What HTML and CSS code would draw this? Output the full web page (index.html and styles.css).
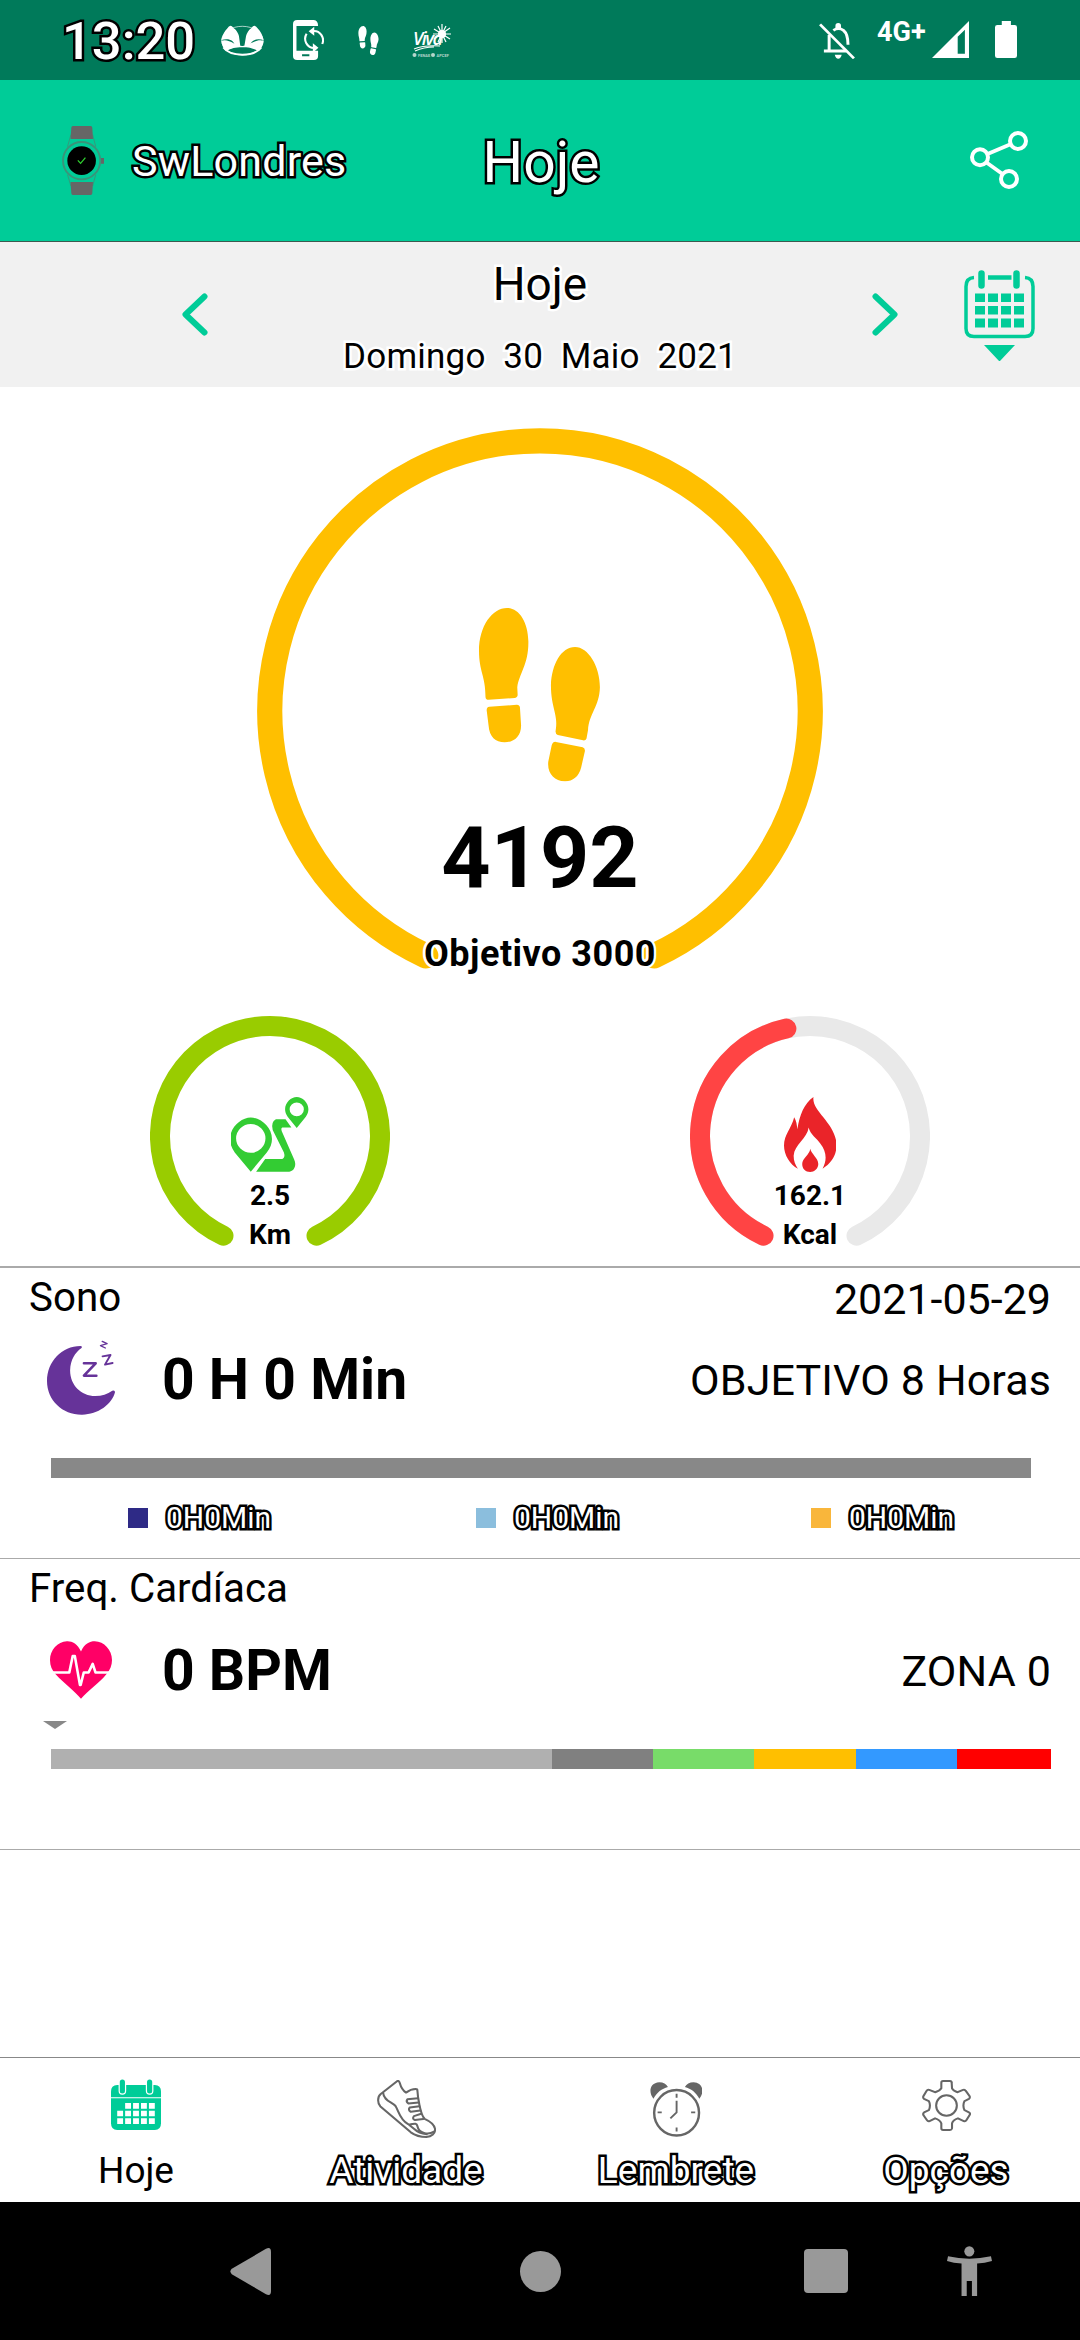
FILE: index.html
```html
<!DOCTYPE html>
<html lang="pt">
<head>
<meta charset="utf-8">
<title>Hoje</title>
<link rel="stylesheet" href="styles.css">
</head>
<body>
<svg class="defs" aria-hidden="true">
  <symbol id="feet" viewBox="625 543 317 454">
    <path d="M698 543C730 543 753 580 754 630C755 690 730 715 725 750L726 770Q726 777 719 778L650 783Q643 783 642 776C642 720 625 710 625 655C625 590 660 543 698 543Z"/>
    <path d="M652 801L724 796Q731 796 732 803L735 850C735 880 715 894 692 894C668 894 652 880 650 850L645 810Q645 802 652 801Z"/>
    <path d="M876 645C910 645 941 695 941 750C940 800 912 820 910 862L906 884Q904 890 897 889L831 875Q825 873 825 866C834 825 813 805 813 745C815 690 840 645 876 645Z"/>
    <path d="M826 893L896 907Q902 909 902 916L892 960C886 985 868 997 849 996C822 995 803 975 806 945L815 902Q818 892 826 893Z"/>
  </symbol>
</svg>

<header class="status">
  <span class="clock outlined">13:20</span>
  <svg class="st-mask" viewBox="641 74 127 95" preserveAspectRatio="none">
    <ellipse cx="704" cy="122" rx="61" ry="44" fill="none" stroke="#fff" stroke-width="2.5" opacity=".8"/>
    <path fill="#fff" d="M642 120C645 105 652 92 660 84Q668 69 678 83Q690 92 694 108L698 138L682 138C680 122 665 113 642 120ZM767 120C764 105 757 92 749 84Q740 69 731 83Q719 92 715 108L710 138L727 138C729 122 744 113 767 120Z"/>
    <path fill="#fff" d="M642 122C665 114 683 138 704 138C725 138 743 114 767 122C766 137 758 148 752 154C735 145 725 142 704 142C683 142 672 145 656 154C648 146 643 135 642 122Z"/>
    <path fill="none" stroke="#fff" stroke-width="6" d="M648 143Q664 165 704 165T760 143"/>
  </svg>
  <svg class="st-phone" viewBox="850 60 89 120" preserveAspectRatio="none">
    <path fill="#fff" fill-rule="evenodd" d="M862 60H910Q922 62 922 78H860V152H922V168Q922 180 910 180H862Q850 180 850 168V72Q850 60 862 60ZM876 163V169H897V163Z"/>
    <path fill="none" stroke="#fff" stroke-width="6" d="M908 93A26 28 0 0 1 934 132M911 144A26 28 0 0 1 889 101"/>
    <path fill="#fff" d="M895 94L911 80V107ZM923 143L907 130V158Z"/>
  </svg>
  <svg class="st-feet" preserveAspectRatio="none"><use href="#feet"/></svg>
  <svg class="st-viva" viewBox="0 0 40 34">
    <text x="1" y="21" class="viva-word">Viva</text>
    <path d="M2 25Q12 21 28 22M3 27Q12 23 22 23" fill="none" stroke="#fff" stroke-width="1.1"/>
    <path d="M30 0V19M22 5L38 15M38 4L22 15M21 10H39M26 2L34 18M34 2L26 18" stroke="#fff" stroke-width="1.2"/>
    <circle cx="30" cy="10" r="4" fill="#fff"/>
    <circle cx="2.5" cy="31" r="2" fill="#b5d6cc"/><circle cx="21" cy="31" r="2" fill="#b5d6cc"/>
    <text x="6" y="32.5" class="viva-tag">FENAE</text><text x="24.5" y="32.5" class="viva-tag">APCEF</text>
  </svg>
  <svg class="st-bell" viewBox="810 68 103 108" preserveAspectRatio="none" fill="none" stroke="#fff">
    <path stroke-width="8.5" d="M851 90Q866 80 880 90Q893 101 893 133M839 104V152M824 152H888"/>
    <path stroke-width="8" d="M813 72L910 174"/>
    <path fill="#fff" stroke="none" d="M857 84V76A8 8 0 0 1 873 76V84ZM855 163H875Q872 175 865 175Q858 175 855 163Z"/>
  </svg>
  <span class="net">4G+</span>
  <svg class="st-signal" viewBox="1138 64 108 110" preserveAspectRatio="none"><path fill="#fff" fill-rule="evenodd" d="M1138 174L1246 64V174ZM1213 111V161H1234V90Z"/></svg>
  <svg class="st-batt" viewBox="1320 63 65 111" preserveAspectRatio="none"><path fill="#fff" d="M1340 63H1367V75H1378Q1385 75 1385 82V167Q1385 174 1378 174H1327Q1320 174 1320 167V82Q1320 75 1327 75H1340Z"/></svg>
</header>

<section class="appbar">
  <div class="device">
    <svg class="watch" viewBox="180 378 122 207" preserveAspectRatio="none">
      <path d="M206 404L196 440M269 404L278 440M196 524L206 558M278 524L269 558" stroke="#2f9e7d" stroke-width="3"/>
      <path fill="#666" d="M211 378H264Q267 379 268 383L270 417H205L207 383Q208 378 211 378ZM205 546H270L268 580Q267 585 264 585H211Q208 585 207 580ZM292 474H302V491H292Z"/>
      <ellipse cx="237" cy="482" rx="54" ry="56" fill="#00cc98" stroke="#3a947a" stroke-width="5.5"/>
      <ellipse cx="237" cy="482" rx="41.500" ry="43"/>
      <path d="M226 481L234 490L248 473" fill="none" stroke="#2fd12f" stroke-width="3.6"/>
    </svg>
    <span class="device-name outlined">SwLondres</span>
  </div>
  <h1 class="title outlined">Hoje</h1>
  <svg class="share" viewBox="970 131 58 58" fill="none" stroke="#fff" stroke-width="4">
    <circle cx="1018" cy="141" r="8"/><circle cx="980" cy="157.300" r="8"/><circle cx="1009" cy="179" r="8"/>
    <path stroke-width="3.800" d="M987.500 154L1010.500 144.300M986.500 162.500L1002.500 174"/>
  </svg>
</section>

<section class="datebar">
  <svg class="arrow" viewBox="0 0 26 43"><path d="M22.500 3.500L3.500 21.500L22.500 39.500"/></svg>
  <div class="datebox">
    <div class="day halo">Hoje</div>
    <div class="date halo">Domingo&nbsp; 30&nbsp; Maio&nbsp; 2021</div>
  </div>
  <svg class="arrow" viewBox="0 0 26 43"><path d="M3.500 3.500L22.500 21.500L3.500 39.500"/></svg>
  <svg class="cal" viewBox="964 269.500 71 91.500">
    <path d="M974 277Q966 277.500 966 286V328Q966 336 974 336H1025Q1033 336 1033 328V286Q1033 277.500 1025 277" fill="none" stroke="#00cc98" stroke-width="3.500"/>
    <path d="M988 277H1011.500" stroke="#00cc98" stroke-width="4.500"/>
    <path d="M981.500 273V285M1016.500 273V285" stroke="#00cc98" stroke-width="6.500" stroke-linecap="round"/>
    <path fill="#00cc98" d="M975 293h10v8.500h-10zM988 293h10v8.500h-10zM1001 293h10v8.500h-10zM1014 293h10v8.500h-10zM975 305.500h10v8.500h-10zM988 305.500h10v8.500h-10zM1001 305.500h10v8.500h-10zM1014 305.500h10v8.500h-10zM975 318h10v9h-10zM988 318h10v9h-10zM1001 318h10v9h-10zM1014 318h10v9h-10zM984 344.500H1015L999.500 361Z"/>
  </svg>
</section>

<main>
  <section class="summary">
    <div class="gauge gauge-big">
      <svg class="ring" viewBox="-283 -283 566 566"><path d="M-114.200 244.900A270.200 270.200 0 1 1 114.200 244.900" stroke="#ffbf00" stroke-width="25.200"/></svg>
      <div class="gauge-body">
        <svg class="feet" preserveAspectRatio="none"><use href="#feet"/></svg>
        <div class="steps">4192</div>
        <div class="goal halo">Objetivo 3000</div>
      </div>
    </div>
    <div class="gauges">
      <div class="gauge gauge-small">
        <svg class="ring" viewBox="-120 -120 240 240"><path d="M-46.500 99.700A110 110 0 1 1 46.500 99.700" stroke="#99cc00" stroke-width="20"/></svg>
        <div class="gauge-body">
          <svg class="route" viewBox="209 290 145 223" preserveAspectRatio="none" fill="#33cc33">
            <path fill-rule="evenodd" d="M246 512L216 455C192 403 222 351 246 351C270 351 302 403 276 455ZM246 370A27.500 43 0 1 0 246 456A27.500 43 0 1 0 246 370Z"/>
            <path d="M293 356H311L322 381H305Q302 383 304 392L327 475C333 495 326 511 318 512H256L273 474H305Q311 470 308 455L287 388Q283 365 293 356Z"/>
            <path fill-rule="evenodd" d="M332 382L315 349C302 320 318 290 332 290C346 290 362 320 349 349ZM332 306A13 20 0 1 0 332 347A13 20 0 1 0 332 306Z"/>
          </svg>
          <div class="val">2.5</div><div class="unit">Km</div>
        </div>
      </div>
      <div class="gauge gauge-small">
        <svg class="ring" viewBox="-120 -120 240 240"><path d="M-46.500 99.700A110 110 0 1 1 46.500 99.700" stroke="#e9e9e9" stroke-width="20"/><path d="M-46.500 99.700A110 110 0 0 1 -23.600 -107.400" stroke="#ff4444" stroke-width="20"/></svg>
        <div class="gauge-body">
          <svg class="fire" viewBox="1239 291 98 226" preserveAspectRatio="none" fill="#ea2429">
            <path d="M1294 291C1290 335 1337 370 1337 437C1337 465 1328 490 1311 507C1320 480 1318 455 1307 432C1300 415 1288 405 1285 383C1283 415 1258 435 1257 468C1257 485 1260 495 1265 507C1250 495 1239 465 1239 437C1239 405 1253 385 1258 352C1262 362 1263 375 1264 388C1268 345 1277 310 1294 291Z"/>
            <path d="M1288 447C1290 463 1303 475 1303 493C1303 508 1295 517 1288 517C1279 517 1273 508 1273 493C1273 475 1287 465 1288 447Z"/>
          </svg>
          <div class="val">162.1</div><div class="unit">Kcal</div>
        </div>
      </div>
    </div>
  </section>

  <section class="panel">
    <div class="panel-head"><span class="name">Sono</span><span class="info">2021-05-29</span></div>
    <div class="panel-main">
      <svg class="moon" viewBox="137 270 197 225" preserveAspectRatio="none">
        <path fill="#663399" d="M234 288Q240 289 237 294C218 308 205 330 204 360C203 403 235 438 277 438C296 438 312 432 326 422Q334 419 334 427C325 463 285 494 239 494C183 495 137 452 137 393C137 335 180 288 234 288Z"/>
        <g fill="none" stroke="#663399" stroke-linejoin="round" stroke-linecap="round"><path stroke-width="7.500" d="M244 340H278L244 377H280"/><path stroke-width="5.500" d="M298 319L321 315L305 344L327 339"/><path stroke-width="4" d="M297 274L311 281L292 287L306 294"/></g>
      </svg>
      <strong class="big">0 H 0 Min</strong><span class="info">OBJETIVO 8 Horas</span>
    </div>
    <div class="sleepbar"></div>
    <div class="legend">
      <div class="key k1"><i></i><span class="outlined">0H0Min</span></div>
      <div class="key k2"><i></i><span class="outlined">0H0Min</span></div>
      <div class="key k3"><i></i><span class="outlined">0H0Min</span></div>
    </div>
  </section>

  <section class="panel">
    <div class="panel-head"><span class="name">Freq. Cardíaca</span></div>
    <div class="panel-main">
      <svg class="heart" viewBox="145 275 180 175" preserveAspectRatio="none">
        <path fill="#ff0066" d="M235 307C225 283 208 275 194 276C167 277 145 303 145 332C145 350 151 363 162 376C185 402 215 425 235 449C255 425 288 402 308 376C320 362 325 348 325 332C325 303 302 276 275 276C260 276 245 283 235 307Z"/>
        <path fill="none" stroke="#fff" stroke-width="7.500" stroke-linejoin="round" d="M145 370H201L211 320H217L232 408H234L243 370H257L269 344L277 370H325"/>
      </svg>
      <strong class="big">0 BPM</strong><span class="info">ZONA 0</span>
    </div>
    <svg class="marker" viewBox="0 0 24 8"><path d="M0 0H24L12 8Z" fill="#888"/></svg>
    <div class="zones"><i class="z0"></i><i class="z1"></i><i class="z2"></i><i class="z3"></i><i class="z4"></i><i class="z5"></i></div>
  </section>
</main>

<nav class="tabs">
  <div class="tab">
    <svg class="t-cal" viewBox="322 117 145 153" preserveAspectRatio="none">
      <path fill="#00cc98" d="M340 135H449Q467 136 467 154V250Q467 270 449 270H340Q322 270 322 250V154Q322 136 340 135Z"/>
      <path stroke="#fff" stroke-width="3" d="M322 173H467"/>
      <path stroke="#fff" stroke-width="22" stroke-linecap="round" d="M355 126V153M434 126V153"/>
      <path stroke="#00cc98" stroke-width="15" stroke-linecap="round" d="M355 126V153M434 126V153"/>
      <path fill="#fff" d="M363 189h17v17h-17zM386 189h17v17h-17zM409 189h17v17h-17zM432 189h17v17h-17zM340 212h17v17h-17zM363 212h17v17h-17zM386 212h17v17h-17zM409 212h17v17h-17zM432 212h17v17h-17zM340 235h17v17h-17zM363 235h17v17h-17zM386 235h17v17h-17zM409 235h17v17h-17zM432 235h17v17h-17z"/>
    </svg>
    <span class="label">Hoje</span>
  </div>
  <div class="tab">
    <svg class="t-shoe" viewBox="1092 119 171 175" preserveAspectRatio="none" fill="none" stroke="#666" stroke-width="6" stroke-linejoin="round" stroke-linecap="round">
      <path d="M1151 122L1102 162C1093 170 1093 190 1102 199L1190 277C1205 288 1220 291 1235 291C1250 290 1262 280 1260 266C1258 252 1245 243 1230 236C1218 225 1210 170 1209 150Q1209 146 1204 146C1193 146 1185 150 1176 157C1166 150 1162 143 1158 128Q1156 120 1151 122Z"/>
      <path d="M1110 158C1111 182 1137 185 1146 198C1155 213 1158 238 1182 252C1191 257 1206 243 1209 258C1213 280 1240 286 1257 275M1182 252L1200 267Q1213 280 1236 283"/>
      <path d="M1211 174L1180 177Q1175 184 1183 190L1213 187M1215 198L1187 202Q1181 209 1190 215L1218 211M1220 221L1199 228Q1193 236 1202 240L1226 237"/>
    </svg>
    <span class="label outlined">Atividade</span>
  </div>
  <div class="tab">
    <svg class="t-clock" viewBox="318 127 152 163" preserveAspectRatio="none" fill="none" stroke="#666">
      <path fill="#666" stroke="none" d="M328 177C314 160 315 130 345 128C357 128 365 133 370 142C352 147 338 158 328 177ZM461 177C475 160 474 130 444 128C432 128 424 133 419 142C437 147 451 158 461 177Z"/>
      <ellipse cx="395" cy="219" rx="65" ry="68" stroke-width="7"/>
      <path stroke-width="5.500" d="M395 162V174M395 263V275M340 218H352M437 218H449M395 183V218L377 236"/>
    </svg>
    <span class="label outlined">Lembrete</span>
  </div>
  <div class="tab">
    <svg class="t-gear" viewBox="1105 119 142 154" preserveAspectRatio="none" fill="none" stroke="#666" stroke-width="6">
      <path d="M1161 144V127Q1161 122 1166 122H1186Q1191 122 1191 127L1192 144Q1195 151 1208 156L1224 149Q1229 147 1232 152L1243 168Q1245 173 1241 176L1228 183Q1222 196 1228 210L1241 217Q1246 220 1243 225L1234 240Q1231 245 1226 243L1209 235Q1195 240 1192 250V265Q1191 270 1186 270H1166Q1161 270 1161 265V250Q1157 240 1143 235L1127 243Q1122 245 1119 240L1109 225Q1107 220 1111 217L1125 210Q1131 196 1125 183L1111 176Q1107 173 1109 168L1118 152Q1121 147 1126 149L1143 156Q1157 151 1161 144Z"/>
      <ellipse cx="1176" cy="196" rx="30" ry="31"/>
    </svg>
    <span class="label outlined">Opções</span>
  </div>
</nav>

<footer class="sysnav">
  <svg class="s-back" viewBox="0 0 41 47"><path d="M36 .8Q41 -1.500 41 4V43Q41 48.500 36 46.200L1.800 26.200Q-1 23.500 1.800 20.800Z"/></svg>
  <svg class="s-home" viewBox="0 0 41 41"><circle cx="20.500" cy="20.500" r="20.500"/></svg>
  <svg class="s-recent" viewBox="0 0 44 44"><rect width="44" height="44" rx="4"/></svg>
  <svg class="s-access" viewBox="1181 617 130 151" preserveAspectRatio="none"><ellipse cx="1245.500" cy="633" rx="14.500" ry="15.500"/><path d="M1184 648Q1245 663 1308 648L1311 662Q1290 668 1268 670V768H1253V723H1238V768H1223V670Q1200 668 1181 662Z"/></svg>
</footer>
</body>
</html>
```
FILE: styles.css
```css
* { box-sizing: border-box; }
body {
  margin: 0;
  width: 1080px;
  height: 2340px;
  display: flex;
  flex-direction: column;
  background: #fff;
  color: #000;
  font-family: Roboto, "Liberation Sans", sans-serif;
  overflow: hidden;
}
svg { display: block; flex: none; }
.defs { display: none; }
.outlined {
  color: #fff;
  -webkit-text-stroke: 5px #000;
  paint-order: stroke fill;
  stroke-linejoin: round;
}
.halo {
  -webkit-text-stroke: 5px #fff;
  paint-order: stroke fill;
}

/* status bar */
.status {
  height: 80px;
  background: #007a5a;
  display: flex;
  align-items: flex-start;
  padding-left: 62px;
  color: #fff;
}
.clock { width: 159px; font-size: 52.500px; font-weight: 500; line-height: 83px; }
.st-mask { width: 43px; height: 31px; margin-top: 25px; }
.st-phone { width: 31px; height: 40px; margin: 20px 0 0 29px; }
.st-feet { width: 21px; height: 29px; margin: 26px 0 0 34px; fill: #fff; }
.st-viva { width: 40px; height: 34px; margin: 24px 0 0 33px; }
.viva-word { font: italic 600 18px "Open Sans", sans-serif; fill: #fff; letter-spacing: -1.5px; }
.viva-tag { font: 700 4px Roboto, sans-serif; fill: #b5d6cc; }
.st-bell { width: 36px; height: 36px; margin: 23px 0 0 367px; }
.net { width: 55px; margin: 16px 0 0 22px; font-size: 27px; font-weight: 700; line-height: 33px; }
.st-signal { width: 37px; height: 37px; margin-top: 21px; }
.st-batt { width: 22px; height: 37px; margin: 21px 0 0 26px; }

/* app bar */
.appbar {
  height: 162px;
  background: #00cc98;
  border-bottom: 1px solid #3c5a50;
  display: grid;
  grid-template-columns: 1fr 130px 1fr;
  padding: 0 52px 0 62px;
  align-items: start;
}
.device { display: flex; }
.watch { width: 42px; height: 69px; margin-top: 46px; }
.device-name { margin-left: 28px; font-size: 43px; letter-spacing: .2px; line-height: 163px; }
.title { margin: 0; font-size: 57px; font-weight: 400; line-height: 165px; text-align: center; margin-left: -8px; }
.share { width: 58px; height: 58px; margin-top: 51px; justify-self: end; }

/* date selector */
.datebar {
  height: 145px;
  background: #f1f1f1;
  display: flex;
  align-items: flex-start;
  padding-left: 182px;
}
.arrow { width: 26px; height: 43px; margin-top: 51px; fill: none; stroke: #00cc98; stroke-width: 6px; stroke-linecap: round; stroke-linejoin: round; }
.datebox { width: 664px; text-align: center; }
.day { font-size: 46px; line-height: 60px; margin-top: 12px; }
.date { font-size: 35px; letter-spacing: .2px; line-height: 40px; margin-top: 23px; }
.cal { width: 71px; height: 91.5px; margin: 27.5px 0 0 66px; }

/* gauges */
.summary { height: 881px; border-bottom: 2px solid #aaa; padding-top: 41px; }
.gauge { display: grid; margin: 0 auto; }
.gauge > * { grid-area: 1 / 1; }
.ring { fill: none; stroke-linecap: round; width: 100%; height: 100%; }
.gauge-body { display: flex; flex-direction: column; align-items: center; z-index: 1; }
.gauge-big { width: 566px; height: 566px; }
.gauge-big .gauge-body { padding-top: 180px; }
.feet { width: 121.300px; height: 173.700px; fill: #ffbf00; }
.steps { font-size: 86px; font-weight: 700; line-height: 100px; margin-top: 26px; }
.goal { font-size: 36px; letter-spacing: .5px; font-weight: 700; line-height: 40px; margin-top: 26px; white-space: nowrap; }
.gauges { display: grid; grid-template-columns: 1fr 1fr; margin-top: 22px; }
.gauge-small { width: 240px; height: 240px; }
.gauge-small .gauge-body { padding-top: 81px; font-size: 28px; font-weight: 700; line-height: 26px; }
.route { width: 77.500px; height: 75px; }
.fire { width: 52.500px; height: 75px; }
.val { margin-top: 11px; }
.unit { margin-top: 13px; }

/* sleep and heart panels */
.panel { height: 291px; border-bottom: 1px solid #aaa; }
.panel-head { display: flex; justify-content: space-between; height: 60px; padding: 0 29px 0 29px; }
.name { font-size: 40.300px; line-height: 59px; }
.info { font-size: 43px; line-height: 62px; }
.panel-main { display: flex; align-items: center; height: 102px; padding-right: 29px; }
.moon { width: 68px; height: 75px; margin: 0 47px 3px 47px; }
.heart { width: 62px; height: 58px; margin: 0 50px 0 50px; }
.big { font-size: 57px; flex: 1; line-height: 102px; padding-top: 2px; }
.panel-main .info { letter-spacing: .12px; padding-top: 1px; }
.sleepbar { height: 20px; margin: 28px 49px 0 51px; background: #888; }
.legend { display: flex; margin-top: 30px; height: 20px; }
.key { display: flex; }
.key i { width: 20px; height: 20px; margin-right: 18px; }
.key span { font-size: 30px; line-height: 20px; }
.k1 { margin-left: 128px; width: 348px; }
.k2 { width: 335px; }
.k1 i { background: #2e2a86; }
.k2 i { background: #8bbedd; }
.k3 i { background: #f9b63b; }
.marker { width: 24px; height: 8px; margin-left: 43px; }
.zones { display: grid; grid-template-columns: 501px 101px 101px 102px 101px 94px; height: 20px; margin: 20px 0 0 51px; }
.z0 { background: #b0b0b0; }
.z1 { background: #808080; }
.z2 { background: #78dc69; }
.z3 { background: #ffbf00; }
.z4 { background: #3399ff; }
.z5 { background: #f00; }

/* bottom tabs */
.tabs { height: 145px; margin-top: auto; border-top: 1px solid #888; display: grid; grid-template-columns: 272px 268px 272px 268px; flex: none; }
.tab { display: grid; grid-template-rows: 92px 40px; justify-items: center; }
.label { font-size: 37px; line-height: 41px; }
.t-cal { width: 50px; height: 51px; margin-top: 21px; }
.t-shoe { width: 59px; height: 58px; margin-top: 22px; }
.t-clock { width: 52.500px; height: 54.500px; margin-top: 24px; }
.t-gear { width: 49px; height: 51px; margin-top: 22px; }

/* system navigation */
.sysnav { height: 138px; flex: none; background: #000; display: flex; align-items: flex-start; fill: #999; padding: 44px 0 0 230px; }
.s-back { width: 41px; height: 47px; margin-top: 2px; }
.s-home { width: 41px; height: 41px; margin: 5px 0 0 249px; }
.s-recent { width: 44px; height: 44px; margin: 3px 0 0 243px; }
.s-access { width: 45px; height: 50px; margin-left: 99px; }
```
